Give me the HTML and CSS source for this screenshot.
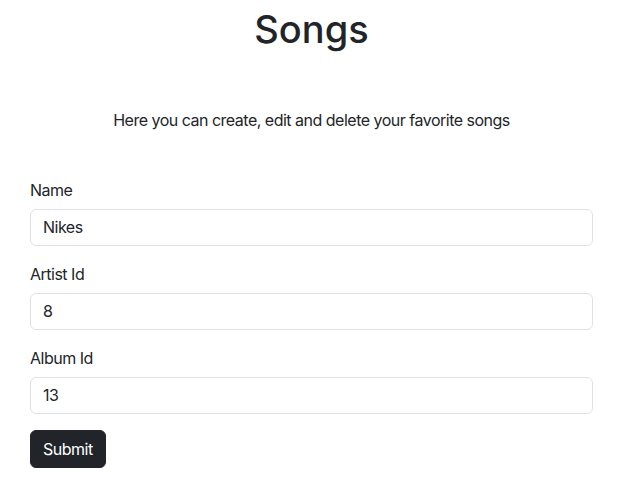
FILE: index.html
```html
<!DOCTYPE html>
<html lang="en">
<head>
<meta charset="utf-8">
<title>Songs</title>
<link rel="stylesheet" href="styles.css">
</head>
<body>
<main class="page">
  <h1 class="title">Songs</h1>
  <p class="lead">Here you can create, edit and delete your favorite songs</p>
  <form class="song-form">
    <div class="field">
      <label class="label" for="name">Name</label>
      <input class="input" id="name" type="text" value="Nikes">
    </div>
    <div class="field">
      <label class="label" for="artist">Artist Id</label>
      <input class="input" id="artist" type="text" value="8">
    </div>
    <div class="field">
      <label class="label" for="album">Album Id</label>
      <input class="input" id="album" type="text" value="13">
    </div>
    <div class="actions">
      <button class="btn" type="button">Submit</button>
    </div>
  </form>
</main>
</body>
</html>
```
FILE: styles.css
```css
* { box-sizing: border-box; }
html, body { margin: 0; padding: 0; background: #fff; }
body {
  font-family: Inter, "Helvetica Neue", Arial, sans-serif;
  font-size: 16px;
  line-height: 1.5;
  letter-spacing: -0.5px;
  color: #212529;
}
.page {
  padding: 0 27px 0 30px;
}
.title {
  margin: 0;
  padding-top: 7px;
  text-align: center;
  font-size: 38px;
  font-weight: 500;
  line-height: 1.2;
  letter-spacing: 0;
}
.lead {
  margin: 55px 0 0;
  text-align: center;
}
.song-form {
  margin-top: 46px;
  display: flex;
  flex-direction: column;
  gap: 16px;
}
.field {
  display: flex;
  flex-direction: column;
  gap: 7px;
}
.label { display: block; }
.input {
  font: inherit;
  letter-spacing: -0.5px;
  color: #212529;
  height: 37px;
  padding: 6px 12px;
  border: 1px solid #dee2e6;
  border-radius: 6px;
  background: #fff;
  width: 100%;
}
.actions { display: flex; }
.btn {
  font: inherit;
  letter-spacing: -0.5px;
  color: #fff;
  background: #212529;
  border: 1px solid #212529;
  border-radius: 6px;
  padding: 6px 12px;
  height: 38px;
  line-height: 1.5;
}
```
